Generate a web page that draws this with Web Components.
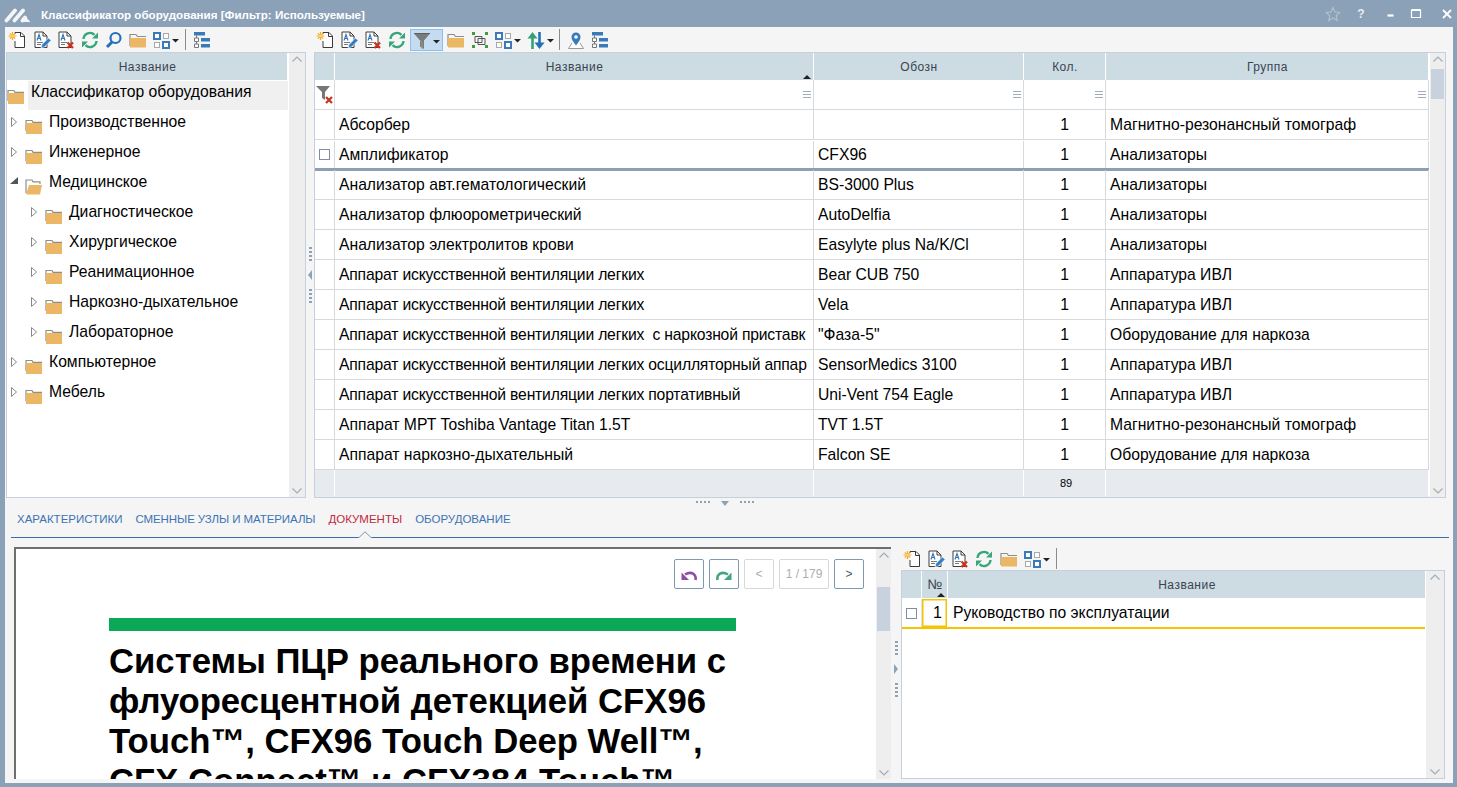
<!DOCTYPE html>
<html lang="ru"><head><meta charset="utf-8"><title>Классификатор оборудования</title>
<style>
html,body{margin:0;height:100%;overflow:hidden;background:#8aa1b8;font:15.700px "Liberation Sans",Arial,sans-serif;color:#000}
</style></head><body>
<script>
const doc=`<path d="M2 1h8l4 4v11.500H2z" fill="#fff" stroke="#3f3f3f"/><path d="M10 1v4h4" fill="none" stroke="#3f3f3f"/><path d="M4 9.500l2-6 2 6M4.800 7.500h2.400" fill="none" stroke="#2f74ba" stroke-width="1.100"/><path d="M4 11.500h6M4 13.500h4" stroke="#777" fill="none"/>`;
const grid4=`<g fill="#fff"><rect x="1" y="2" width="6" height="6" stroke="#3a7ab8" stroke-width="2"/><rect x="10.500" y="2.500" width="5" height="5" stroke="#a9a9a9"/><rect x="1.500" y="11.500" width="5" height="5" stroke="#a9a9a9"/><rect x="10" y="11" width="6" height="6" stroke="#3a7ab8" stroke-width="2"/></g>`;
const caret=(x,y)=>`<path d="M${x} ${y}h7l-3.500 3.500z" fill="#222"/>`;
const I={
 new:[18,`<path d="M7 3V1.500h6l3.500 3.500v11.500H7V10" fill="#fff" stroke="#3a3a3a"/><path d="M12.500 1.500V5.500h4" fill="none" stroke="#3a3a3a"/><path d="M4.500 1v8M.5 5h8M1.800 2.300l5.400 5.400M7.200 2.300L1.800 7.700" stroke="#f2ab27" stroke-width="1.200"/><circle cx="4.500" cy="5" r="1.600" fill="#ffd35c"/>`],
 edit:[18,doc+`<path d="M8 17l1-3.500 6.500-6.500 2.500 2.500-6.500 6.500z" fill="#2c7cc6" stroke="#fff" stroke-width=".6"/>`],
 del:[18,doc+`<path d="M10.500 11.500l5.500 5.500M16 11.500l-5.500 5.500" stroke="#c8321f" stroke-width="2.300" fill="none"/>`],
 refresh:[18,`<g fill="none" stroke="#38a57b" stroke-width="2.400"><path d="M2.500 8A6.500 6.500 0 0 1 13.500 3.800"/><path d="M15.500 10A6.500 6.500 0 0 1 4.500 14.200"/></g><path d="M11 7.500h6V1.500zM7 10.500H1v6z" fill="#38a57b"/>`],
 search:[18,`<circle cx="10.500" cy="7" r="5" fill="none" stroke="#2470b8" stroke-width="2.200"/><path d="M7 11l-5 5" stroke="#2470b8" stroke-width="3"/>`],
 folder:[18,`<path d="M1 15V3.500h6l1.500 2H17" fill="none" stroke="#8e8e8e" stroke-width="1.200"/><path d="M1 7h16v9.500H1z" fill="#ebb765"/>`],
 grid:[27,grid4+caret(19,8)],
 tree:[18,`<path d="M1 1h11v3.500H1zM8 7h9v3.500H8zM8 13h9v3.500H8z" fill="#3a7ab8"/><path d="M1.500 7h4v3.500h-4zM1.500 13h4v3.500h-4z" fill="#fff" stroke="#777"/><path d="M3.500 4.500V7M3.500 10.500V13" stroke="#777"/>`],
 funnel:[27,`<path d="M1 2.500h16l-6 7V18l-4-2.500V9.500z" fill="#7a7a7a"/><path d="M1 2.500h16" stroke="#5f5f5f"/><path d="M7 9.500l2 1.500V18" stroke="#9a9a9a" fill="none"/>`+caret(20,9)],
 select:[18,`<path d="M4 5.500h7v6H4zM7 7.500h7v6H7z" fill="none" stroke="#555"/><path d="M1 1h3v3H1zM14 1h3v3h-3zM1 14h3v3H1zM14 14h3v3h-3z" fill="#3f9c3f"/>`],
 sort:[27,`<path d="M5.500 18V5" stroke="#34a177" stroke-width="2.600"/><path d="M.5 7.500l5-6.500 5 6.500z" fill="#34a177"/><path d="M12.500 1v13" stroke="#2470b8" stroke-width="2.600"/><path d="M7.500 11.500l5 6.500 5-6.500z" fill="#2470b8"/>`+caret(20,8)],
 pin:[18,`<path d="M5 12l-3.500 5.500h15L13 12" fill="#fff" stroke="#999"/><path d="M9 14.500C6 10.500 4.500 8.500 4.500 6a4.500 4.500 0 0 1 9 0c0 2.500-1.500 4.500-4.500 8.500z" fill="#3a7ab8"/><circle cx="9" cy="6" r="1.800" fill="#fff"/>`],
 filterx:[18,`<path d="M0 0h14l-5 6v8L6 12V6z" fill="#777"/><path d="M10 11l6 6M16 11l-6 6" stroke="#c8321f" stroke-width="2.200"/>`],
 undo:[18,`<path d="M15.500 15C16.500 9.500 11.500 5.500 5 9.500" fill="none" stroke="#8e4ea6" stroke-width="2.600"/><path d="M1.500 15V7.500L9 15z" fill="#8e4ea6"/>`],
 redo:[18,`<path d="M2.500 15C1.500 9.500 6.500 5.500 13 9.500" fill="none" stroke="#45a581" stroke-width="2.600"/><path d="M16.500 15V7.500L9 15z" fill="#45a581"/>`],
 folderT:[18,`<path d="M1 13V2.500h6l1 1.800h9" fill="none" stroke="#8e8e8e" stroke-width="1.200"/><path d="M1 5h16v11H1z" fill="#ebb765"/>`],
 folderO:[18,`<path d="M1 15V2h6l1 1.800h7V6" fill="none" stroke="#8e8e8e" stroke-width="1.200"/><path d="M4 7h13l-2 9.500H1z" fill="#ebb765"/>`],
 logo:[27,`<g fill="none" stroke="#f3f5f7" stroke-width="3.800" stroke-linecap="round"><path d="M2.500 15.500L11 5.500M10.500 15.500L19 5.500M18.500 15.500L21 12.500"/></g><path d="M21 11l5.500 6H17z" fill="#f3f5f7"/>`],
 star:[16,`<path d="M8 1.500l2 4.500 4.700.5-3.500 3.200 1 4.800L8 12l-4.200 2.500 1-4.800L1.300 6.500 6 6z" fill="none" stroke="#b3c0ce" stroke-width="1.200"/>`],
 min:[12,`<path d="M2.500 7.500h6" stroke="#fff" stroke-width="2.200"/>`],
 max:[12,`<path d="M1.500 2h9v7.500h-9z" fill="none" stroke="#fff" stroke-width="1.200"/><path d="M1.500 2h9" stroke="#fff" stroke-width="2"/>`],
 close:[12,`<path d="M2 2l8 8M10 2l-8 8" stroke="#fff" stroke-width="1.800"/>`],
 menu:[10,`<path d="M1 2.500h8M1 5.500h8M1 8.500h8" stroke="#9eacbb" stroke-width="1"/>`],
};
function def(name,css,html,extra){customElements.define(name,class extends HTMLElement{
 constructor(){super();this.attachShadow({mode:'open'}).innerHTML=`<style>${css}</style>${html}`;}
 connectedCallback(){extra&&extra.call(this)}
})}
customElements.define('x-icon',class extends HTMLElement{
 constructor(){super();this.attachShadow({mode:'open'})}
 connectedCallback(){const n=this.getAttribute('name');if(!n||!I[n])return;const [w,b]=I[n];
  const h=(w==10||w==12||w==16)?w:18;
  this.shadowRoot.innerHTML=`<style>:host{display:block;flex:none;line-height:0}</style><svg width="${w}" height="${h}" viewBox="0 0 ${w} ${h}">${b}</svg>`}
});
def('x-window',`:host{display:flex;flex-direction:column;height:787px;width:1457px;box-sizing:border-box;padding:0 4px 4px 5px}
 .in{flex:1;background:#f5f5f5;display:flex;flex-direction:column;min-height:0}`,`<slot name="title"></slot><div class="in"><slot></slot></div>`);
def('x-titlebar',`:host{display:flex;align-items:center;height:27px;margin-left:-5px;margin-right:-4px;color:#fff;font:bold 11.600px "Liberation Sans",sans-serif;padding-left:4px;flex:none}
 .t{margin-left:10px;flex:1;padding-top:2px}`,`<slot name="logo"></slot><span class="t"><slot></slot></span><slot name="btn"></slot>`);
def('x-winbtn',`:host{display:flex;width:24px;justify-content:center;align-items:center;color:#e8edf2;font:bold 12px "Liberation Sans",sans-serif;height:22px}`,`<slot></slot>`);
def('x-toolbar',`:host{display:flex;align-items:center;height:25px;flex:none;padding-left:2px;gap:6px;box-sizing:border-box}`,`<slot></slot>`);
def('x-tbtn',`:host{display:flex;align-items:center;justify-content:center;height:22px;box-sizing:border-box;margin:0 -2px}
 :host([on]){background:#c3dcf2;border:1px solid #8fc0ea;padding:0 2px}`,`<slot></slot>`);
def('x-sep',`:host{display:block;width:1px;height:21px;background:#8b8b8b;margin:0 1px 0 -1px}`,``);
def('x-top',`:host{display:flex;height:471px;flex:none;padding-left:1px}`,`<slot></slot>`);
def('x-col',`:host{display:flex;flex-direction:column;flex:none;min-height:0}`,`<slot></slot>`);
def('x-pane',`:host{display:flex;flex:1;min-height:0;box-sizing:border-box;border:1px solid #c6d0dd;background:#fff}
 .b{flex:1;min-width:0;display:flex;flex-direction:column;overflow:hidden}`,`<div class="b"><slot></slot></div><slot name="sb"></slot>`);
def('x-scrollbar',`:host{display:block;width:var(--sbw,16px);flex:none;background:#eeeeee;position:relative;border-left:1px solid #fff;box-sizing:border-box}
 .u,.d{position:absolute;left:50%;margin-left:-5px;width:10px;height:6px}
 .u{top:3px}.d{bottom:3px}
 .th{position:absolute;left:1px;right:1px;background:#c8d2de}`,
 `<svg class="u" viewBox="0 0 10 6"><path d="M.5 5.500L5 1l4.500 4.500" fill="none" stroke="#9fadbd" stroke-width="1.200"/></svg><div class="th"></div><svg class="d" viewBox="0 0 10 6"><path d="M.5 .5L5 5l4.500-4.500" fill="none" stroke="#9fadbd" stroke-width="1.200"/></svg>`,
 function(){const t=this.getAttribute('top');const e=this.shadowRoot.querySelector('.th');if(t){e.style.top=t+'px';e.style.height=this.getAttribute('len')+'px'}});
def('x-vsplit',`:host{display:flex;flex-direction:column;align-items:center;justify-content:center;width:8px;flex:none;gap:9px;box-sizing:border-box}
 .dots{display:flex;flex-direction:column;gap:2px}.dots i{display:block;width:3px;height:2px;background:#8ea2b6}
 .tri{width:0;height:0;border:5px solid transparent;border-left:0;border-right:4px solid #8ea2b6}
 :host([right]) .tri{border-right:0;border-left:4px solid #8ea2b6}`,
 `<div class="dots"><i></i><i></i><i></i><i></i></div><div class="tri"></div><div class="dots"><i></i><i></i><i></i><i></i></div>`);
def('x-hsplit',`:host{display:flex;align-items:flex-start;justify-content:center;height:10px;flex:none;gap:11px;padding:3px 8px 0 0;box-sizing:border-box}
 .dots{display:flex;gap:2px}.dots i{display:block;width:2px;height:2px;background:#8ea2b6}
 .tri{width:0;height:0;border:4px solid transparent;border-bottom:0;border-top:5px solid #8ea2b6}`,
 `<div class="dots"><i></i><i></i><i></i><i></i></div><div class="tri"></div><div class="dots"><i></i><i></i><i></i><i></i></div>`);
def('x-node',`:host{display:flex;height:30px;align-items:flex-start;flex:none;box-sizing:border-box;padding-left:calc(var(--lv,0) * 20px);white-space:nowrap}
 .a{width:13px;height:30px;flex:none;display:flex;align-items:flex-start;justify-content:center;padding-top:6px;box-sizing:border-box}
 .f{margin:8px 4px 0 5px;flex:none}
 .t{line-height:20px;padding-top:2px;flex:1;height:28px;padding-left:2px}
 :host([root]) .a{width:0}
 :host([root]) .t{background:#f0f0f0;padding-left:3px;margin-top:1px;padding-top:1px}
 :host([root]) .f{margin:8px 3px 0 0}`,
 `<div class="a"></div><x-icon class="f"></x-icon><div class="t"><slot></slot></div>`,
 function(){const s=this.shadowRoot,a=s.querySelector('.a'),e=this.getAttribute('exp');
  if(e==='c')a.innerHTML='<svg width="8" height="12" viewBox="0 0 8 12"><path d="M1.500 1.500L6.500 6l-5 4.500z" fill="#fff" stroke="#888"/></svg>';
  if(e==='o')a.innerHTML='<svg width="11" height="10" viewBox="0 0 11 10"><path d="M10 1v7H2z" fill="#555"/></svg>';
  const f=s.querySelector('.f');f.setAttribute('name',e==='o'?'folderO':'folderT');f.connectedCallback();
  this.style.setProperty('--lv',this.getAttribute('lv')||0)});
def('x-grid',`:host{display:flex;flex-direction:column;flex:1;min-height:0}`,`<slot></slot>`,function(){this.style.setProperty('--cols',this.getAttribute('cols'))});
def('x-row',`:host{display:grid;grid-template-columns:var(--cols);height:var(--h,30px);flex:none;box-sizing:border-box;border-bottom:1px solid var(--line,#d6d9dd)}
 :host([cur]){border-bottom:3px solid #8e9fb4;height:31px;margin-bottom:-1px;position:relative;padding-top:1px}
 :host([yellow]){border-bottom:2px solid #f5c400;height:31px;padding-top:1px}
 :host([kind=head]){background:#cddbe3;border-bottom:0;--cell-line:#fff;--cpl:1px;color:#3a4450;font-size:12px;--h:27px;letter-spacing:.5px}
 :host([kind=foot]){background:#e7eaef;border-bottom:0;--cell-line:#fff;--cpl:3px;font-size:11px;flex:1;height:auto;padding-bottom:1px}`,`<slot></slot>`);
def('x-c',`:host{display:flex;align-items:center;min-width:0;box-sizing:border-box;border-right:1px solid var(--cell-line,#d6d9dd);padding:0 0 0 4px;white-space:pre;position:relative;letter-spacing:inherit}
 :host([tight]){letter-spacing:-.18px}
 :host([center]){justify-content:center;padding:0 0 0 var(--cpl,0)}
 :host([right]){justify-content:flex-end;padding:0 5px 0 0}
 :host([icon]){padding:0;justify-content:center}
 :host([hl]){box-shadow:inset 0 0 0 1.500px #f5c400;border-right-color:#fff}
 ::slotted(x-icon[slot=corner]){position:absolute;right:1px;top:9px}
 .sort{position:absolute;right:2px;bottom:1px;display:none;width:0;height:0;border:4px solid transparent;border-top:0;border-bottom:4px solid #222}
 :host([sorted]) .sort{display:block}`,`<slot></slot><slot name="corner"></slot><i class="sort"></i>`);
def('x-check',`:host{display:block;width:11px;height:11px;box-sizing:border-box;border:1px solid #7e8fa5;background:#fff;margin:-1px 1px 0 0}`,``);
def('x-bottom',`:host{display:flex;flex:1;min-height:0;padding:0 5px 4px 9px}`,`<slot></slot>`);
def('x-tabs',`:host{display:block;height:30px;box-sizing:border-box;flex:none;margin:0 4px 9px 6px;position:relative;border-bottom:1px solid #3c6ea6;font-size:11.500px;padding:1px 0 0 6px}
 .r{display:flex;gap:13px;align-items:flex-start;line-height:20px}
 .n{position:absolute;left:347px;bottom:-1px;width:14px;height:7px;background:#f5f5f5}`,
 `<div class="r"><slot></slot></div><svg class="n" viewBox="0 0 14 7"><path d="M0 6.500h1L7 .8l6 5.700h1" fill="none" stroke="#7e93ab"/></svg>`);
def('x-tab',`:host{color:#3c74b4;display:block}:host([on]){color:#bf2a3e}`,`<slot></slot>`);
def('x-viewer',`:host{display:flex;width:877px;flex:none;box-sizing:border-box;border-top:2px solid #6f6f6f;border-left:2px solid #6f6f6f;background:#fff;position:relative;height:232px;overflow:hidden}
 .p{flex:1;overflow:hidden;padding:69px 0 0 93px;min-width:0;box-sizing:border-box}
 .bar{height:13px;width:627px;background:#0ba858}
 h1{margin:10px 0 0;font:bold 34.700px/40px "Liberation Sans",sans-serif;color:#000;width:650px}
 .tools{position:absolute;top:10px;right:27px;display:flex;gap:5px}`,
 `<div class="p"><div class="bar"></div><h1><slot></slot></h1></div><div class="tools"><slot name="tools"></slot></div><slot name="sb"></slot>`);
def('x-pbtn',`:host{display:flex;align-items:center;justify-content:center;min-width:30px;height:30px;box-sizing:border-box;border:1px solid #7f99b3;border-radius:2px;background:#fff;font-size:12px;color:#4a5560}
 :host([off]){border-color:#d8d8d8;color:#aeaeae}`,`<slot></slot>`);

document.body.innerHTML=`
<x-window>
 <x-titlebar slot="title"><x-icon slot="logo" name="logo"></x-icon>Классификатор оборудования [Фильтр: Используемые]
  <x-winbtn slot="btn" style="margin-right:4px"><x-icon name="star"></x-icon></x-winbtn><x-winbtn slot="btn" style="margin-right:6px">?</x-winbtn><x-winbtn slot="btn" style="margin-right:1px"><x-icon name="min"></x-icon></x-winbtn><x-winbtn slot="btn" style="margin-right:9px"><x-icon name="max"></x-icon></x-winbtn><x-winbtn slot="btn" style="width:20px"><x-icon name="close"></x-icon></x-winbtn></x-titlebar>
 <x-top>
  <x-col style="width:300px">
   <x-toolbar>
    <x-icon name="new"></x-icon><x-icon name="edit" style="margin-left:1px"></x-icon>${['del','refresh','search','folder'].map(n=>`<x-icon name="${n}"></x-icon>`).join('')}<x-icon name="grid"></x-icon><x-sep></x-sep><x-icon name="tree"></x-icon>
   </x-toolbar>
   <x-pane>
    <x-row kind="head" style="--cols:1fr"><x-c center>Название</x-c></x-row>
    <x-node root>Классификатор оборудования</x-node>
    <x-node exp="c">Производственное</x-node>
    <x-node exp="c">Инженерное</x-node>
    <x-node exp="o">Медицинское</x-node>
    <x-node exp="c" lv="1">Диагностическое</x-node>
    <x-node exp="c" lv="1">Хирургическое</x-node>
    <x-node exp="c" lv="1">Реанимационное</x-node>
    <x-node exp="c" lv="1">Наркозно-дыхательное</x-node>
    <x-node exp="c" lv="1">Лабораторное</x-node>
    <x-node exp="c">Компьютерное</x-node>
    <x-node exp="c">Мебель</x-node>
    <x-scrollbar slot="sb" style="--sbw:17px"></x-scrollbar>
   </x-pane>
  </x-col>
  <x-vsplit style="padding-top:25px"></x-vsplit>
  <x-col style="width:1132px">
   <x-toolbar>
    ${['new','edit','del','refresh'].map(n=>`<x-icon name="${n}"></x-icon>`).join('')}
    <x-tbtn on><x-icon name="funnel"></x-icon></x-tbtn><x-icon name="folder"></x-icon><x-icon name="select"></x-icon><x-icon name="grid" style="margin-right:-1px"></x-icon><x-icon name="sort"></x-icon><x-sep></x-sep><x-icon name="pin"></x-icon><x-icon name="tree"></x-icon>
   </x-toolbar>
   <x-pane>
    <x-grid cols="20px 479px 210px 82px 1fr">
     <x-row kind="head"><x-c></x-c><x-c center sorted>Название</x-c><x-c center>Обозн</x-c><x-c center>Кол.</x-c><x-c center>Группа</x-c></x-row>
     <x-row><x-c icon><x-icon name="filterx"></x-icon></x-c>${[0,1,2,3].map(()=>`<x-c><x-icon slot="corner" name="menu"></x-icon></x-c>`).join('')}</x-row>
     ${[
      ['Абсорбер','','Магнитно-резонансный томограф'],
      ['Амплификатор','CFX96','Анализаторы'],
      ['Анализатор авт.гематологический','BS-3000 Plus','Анализаторы'],
      ['Анализатор флюорометрический','AutoDelfia','Анализаторы'],
      ['Анализатор электролитов крови','Easylyte plus Na/K/Cl','Анализаторы'],
      ['Аппарат искусственной вентиляции легких','Bear CUB 750','Аппаратура ИВЛ'],
      ['Аппарат искусственной вентиляции легких','Vela','Аппаратура ИВЛ'],
      ['Аппарат искусственной вентиляции легких  с наркозной приставк','"Фаза-5"','Оборудование для наркоза'],
      ['Аппарат искусственной вентиляции легких осцилляторный аппар','SensorMedics 3100','Аппаратура ИВЛ'],
      ['Аппарат искусственной вентиляции легких портативный','Uni-Vent 754 Eagle','Аппаратура ИВЛ'],
      ['Аппарат МРТ Toshiba Vantage Titan 1.5T','TVT 1.5T','Магнитно-резонансный томограф'],
      ['Аппарат наркозно-дыхательный','Falcon SE','Оборудование для наркоза'],
     ].map((r,i)=>`<x-row ${i==1?'cur':''}><x-c icon>${i==1?'<x-check></x-check>':''}</x-c><x-c ${r[0].includes('искусственной')?'tight':''}>${r[0]}</x-c><x-c>${r[1]}</x-c><x-c center>1</x-c><x-c>${r[2]}</x-c></x-row>`).join('')}
     <x-row kind="foot"><x-c></x-c><x-c></x-c><x-c></x-c><x-c center>89</x-c><x-c></x-c></x-row>
    </x-grid>
    <x-scrollbar slot="sb" top="16" len="30"></x-scrollbar>
   </x-pane>
  </x-col>
 </x-top>
 <x-hsplit></x-hsplit>
 <x-tabs><x-tab>ХАРАКТЕРИСТИКИ</x-tab><x-tab style="letter-spacing:-.08px">СМЕННЫЕ УЗЛЫ И МАТЕРИАЛЫ</x-tab><x-tab on>ДОКУМЕНТЫ</x-tab><x-tab>ОБОРУДОВАНИЕ</x-tab></x-tabs>
 <x-bottom>
  <x-viewer>Системы ПЦР реального времени с флуоресцентной детекцией CFX96 Touch™, CFX96 Touch Deep Well™, CFX Connect™ и CFX384 Touch™
   <x-pbtn slot="tools"><x-icon name="undo"></x-icon></x-pbtn><x-pbtn slot="tools"><x-icon name="redo"></x-icon></x-pbtn><x-pbtn slot="tools" off>&lt;</x-pbtn><x-pbtn slot="tools" off style="width:50px">1 / 179</x-pbtn><x-pbtn slot="tools">&gt;</x-pbtn>
   <x-scrollbar slot="sb" top="38" len="44"></x-scrollbar>
  </x-viewer>
  <x-vsplit right style="width:10px;padding-top:12px"></x-vsplit>
  <x-col style="width:544px">
   <x-toolbar style="height:23px">
    ${['new','edit','del','refresh'].map(n=>`<x-icon name="${n}"></x-icon>`).join('')}<x-icon name="folder" style="margin-left:1px"></x-icon><x-icon name="grid"></x-icon><x-sep></x-sep>
   </x-toolbar>
   <x-pane>
    <x-grid cols="20px 26px 478px">
     <x-row kind="head"><x-c></x-c><x-c center sorted style="font-size:14px;padding-bottom:2px;letter-spacing:0">№</x-c><x-c center>Название</x-c></x-row>
     <x-row yellow style="--cell-line:#e4e6e8"><x-c icon><x-check style="margin-top:0"></x-check></x-c><x-c right hl style="font-size:16px">1</x-c><x-c style="padding-left:5px">Руководство по эксплуатации</x-c></x-row>
    </x-grid>
    <x-scrollbar slot="sb" style="--sbw:19px"></x-scrollbar>
   </x-pane>
  </x-col>
 </x-bottom>
</x-window>`;
</script>
</body></html>
